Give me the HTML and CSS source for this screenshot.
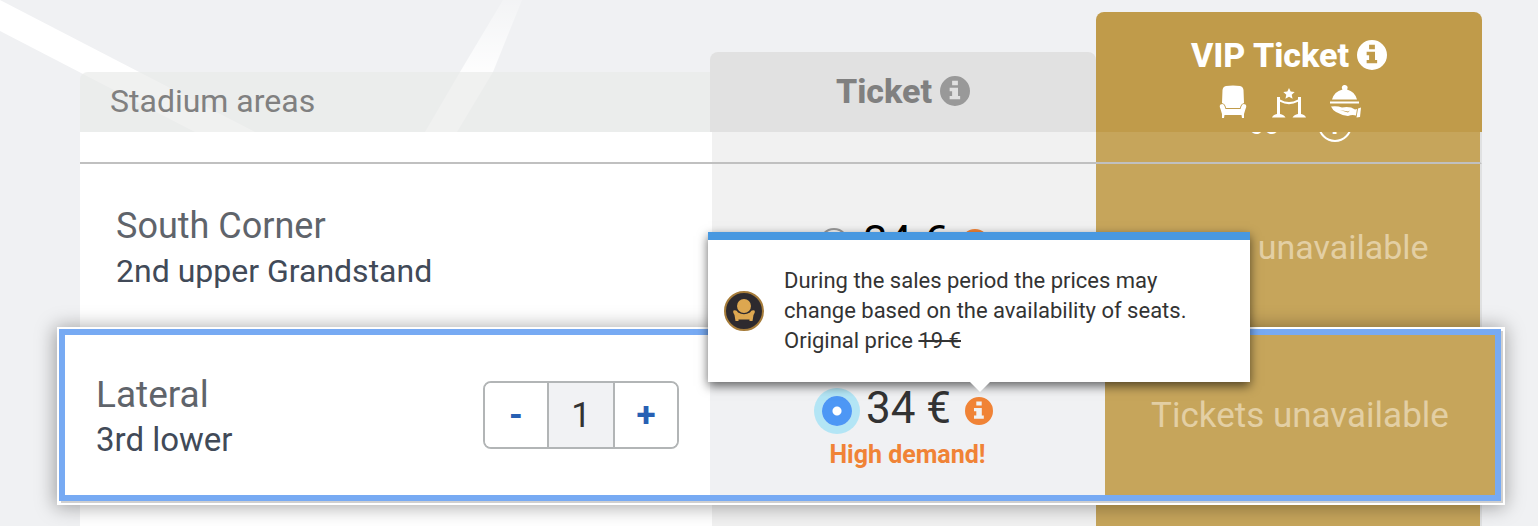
FILE: index.html
```html
<!DOCTYPE html>
<html lang="en">
<head>
    <meta charset="UTF-8">
    <meta name="viewport" content="width=device-width, initial-scale=1.0">
    <title>Stadium areas</title>
    <link rel="stylesheet" href="styles.css">
</head>
<body>
    <!-- background lines -->
    <svg class="lines" width="600" height="132" viewBox="0 0 600 132" aria-hidden="true">
        <defs>
            <linearGradient id="fade" x1="0" y1="0" x2="0" y2="1">
                <stop offset="0" stop-color="#fff" stop-opacity="0.2"/>
                <stop offset="0.55" stop-color="#fff" stop-opacity="0.9"/>
            </linearGradient>
        </defs>
        <path d="M0 0L255 132H195L0 31z" fill="#fff"/>
        <path d="M503 0H522L493 72L457 132H425L460 72z" fill="url(#fade)"/>
    </svg>
    <!-- shared info icon -->
    <svg class="sprite" aria-hidden="true">
        <symbol id="info" viewBox="0 0 28 28">
            <path fill-rule="evenodd" d="M14 0a14 14 0 1 0 0 28a14 14 0 0 0 0-28zM11.3 4.4h5.4v4.2h-5.4zM9 11h7.8v7.6h2v3.2H9v-3.2h2.3v-4.4H9z"/>
        </symbol>
    </svg>

    <table class="tickets">
        <thead>
            <tr class="head">
                <th class="head-area">Stadium areas</th>
                <th class="head-ticket">
                    <span class="title">Ticket
                        <svg class="info" aria-hidden="true"><use href="#info"/></svg>
                    </span>
                </th>
                <th class="head-vip">
                    <span class="title">VIP Ticket
                        <svg class="info" aria-hidden="true"><use href="#info"/></svg>
                    </span>
                    <span class="perks">
                        <svg viewBox="0 0 34 34" aria-hidden="true">
                            <path d="M10 1Q17 0 24 1Q27 1.500 27.500 5L28 18Q24.500 19 24 23H10Q9.500 19 6 18L6.500 5Q7 1.500 10 1z"/>
                            <path d="M4.500 19.500Q7.500 18 8.500 21L9.500 24H24.500L25.500 21Q26.500 18 29.500 19.500Q31 21 29.500 24L28 29V33H26L25.500 30H8.500L8 33H6V29L4.500 24Q3 21 4.500 19.500z"/>
                        </svg>
                        <svg viewBox="0 0 34 34" aria-hidden="true">
                            <path d="M17 3l1.700 3.600 4 .4-3 2.700.9 4-3.600-2-3.600 2 .9-4-3-2.700 4-.4z"/>
                            <path d="M5 12h3v17q4 .5 5.500 3.500H0Q1 29.500 5 29zM26 12h3v17q4 .5 5 3.500H20.500Q22 29.500 26 29z"/>
                            <path d="M8 14.500Q17 19.500 26 14.500V16.800Q17 21.500 8 16.800z"/>
                        </svg>
                        <svg viewBox="0 0 34 34" aria-hidden="true">
                            <path d="M17 0a2.700 2.700 0 0 1 2 4.400Q27 6.500 29 14.500H4Q6 6.500 14.500 4.400A2.700 2.700 0 0 1 17 0z"/>
                            <path d="M2 16.500H31V18.500H2z"/>
                            <path d="M3 21.500Q9 20.500 14 22.500Q22 21 27 24.500L29 24L28 30.500Q24 29.500 20 31Q13 30 8 27Q4.500 25 3 21.500zM12 25L20 26.500L22 25.500L20 27.500z" fill-rule="evenodd"/>
                            <path d="M30 23.500L33 22.500L32 32L28.500 32.500z"/>
                        </svg>
                    </span>
                </th>
            </tr>
        </thead>
        <tbody>
            <!-- row scrolled under the header -->
            <tr class="row row-scrolled">
                <td></td>
                <td class="ticket"></td>
                <td class="vip">
                    <span class="vip-price">60</span>
                    <span class="ring">i</span>
                </td>
            </tr>
            <tr class="row">
                <td class="area">
                    <div class="area-text">
                        <div class="area-name">South Corner</div>
                        <div class="area-level">2nd upper Grandstand</div>
                    </div>
                </td>
                <td class="ticket">
                    <div class="price">
                        <input type="radio" name="ticket" id="south" class="radio">
                        <label for="south">34 €</label>
                        <svg class="info" aria-hidden="true"><use href="#info"/></svg>
                    </div>
                </td>
                <td class="vip">Tickets unavailable</td>
            </tr>
            <tr class="row row-selected">
                <td class="area">
                    <div class="area-text">
                        <div class="area-name">Lateral</div>
                        <div class="area-level">3rd lower</div>
                    </div>
                    <div class="stepper">
                        <button type="button" aria-label="Less">-</button>
                        <input type="text" value="1" aria-label="Number of tickets">
                        <button type="button" aria-label="More">+</button>
                    </div>
                </td>
                <td class="ticket">
                    <div class="price">
                        <input type="radio" name="ticket" id="lateral" class="radio" checked>
                        <label for="lateral">34 €</label>
                        <span class="hint">
                            <svg class="info" aria-hidden="true"><use href="#info"/></svg>
                            <span class="tooltip" role="tooltip">
                                <svg class="badge" viewBox="0 0 40 40" aria-hidden="true">
                                    <circle cx="20" cy="20" r="19" fill="#2d2a2e" stroke="#a67c3a" stroke-width="2"/>
                                    <g fill="#dda750">
                                        <circle cx="20" cy="15" r="7"/>
                                        <path d="M9.500 19.500Q12.500 18.500 14 21.500Q20 25 26 21.500Q27.500 18.500 30.500 19.500Q31.500 21 29.500 24L28.500 30H25.500V28.500H14.500V30H11.500L10.500 24Q8.500 21 9.500 19.500z"/>
                                    </g>
                                </svg>
                                <span>During the sales period the prices may change based on the availability of seats. Original price <s>19 €</s></span>
                            </span>
                        </span>
                    </div>
                    <div class="demand">High demand!</div>
                </td>
                <td class="vip">Tickets unavailable</td>
            </tr>
            <tr class="row row-next">
                <td></td>
                <td class="ticket"></td>
                <td class="vip"></td>
            </tr>
        </tbody>
    </table>
</body>
</html>
```
FILE: styles.css
```css
* {
    box-sizing: border-box;
}
body {
    margin: 0;
    padding: 12px 56px 0 80px;
    background-color: #f0f1f3;
    font-family: Roboto, "Liberation Sans", sans-serif;
}
.lines {
    position: absolute;
    top: 0;
    left: 0;
    z-index: -1;
}
.sprite {
    position: absolute;
    width: 0;
    height: 0;
}
.info {
    width: 30px;
    height: 30px;
    fill: currentColor;
}

/* table */
.tickets, .tickets thead, .tickets tbody {
    display: block;
}
th, td {
    padding: 0;
}
.head {
    display: grid;
    grid-template-columns: 630fr 386fr 386fr;
    align-items: end;
    color: #808080;
}
.head-area {
    height: 60px;
    border-radius: 8px 0 0 0;
    background-color: rgba(232, 234, 232, 0.67);
    font-size: 32px;
    font-weight: 400;
    line-height: 58px;
    text-align: left;
    text-indent: 30px;
}
.head-ticket, .head-vip {
    display: flex;
    flex-direction: column;
    align-items: center;
    border-radius: 8px 8px 0 0;
    font-size: 34px;
    font-weight: 800;
}
.head-ticket {
    height: 80px;
    padding-top: 17px;
    background-color: #e1e1e1;
}
.head-ticket .info {
    color: #999;
}
.head-vip {
    height: 120px;
    padding-top: 21px;
    background-color: #c09b4a;
    color: #fff;
}
.title {
    display: flex;
    align-items: center;
    gap: 8px;
    line-height: 44px;
}
.perks {
    display: flex;
    gap: 22px;
    padding-top: 8px;
}
.perks svg {
    width: 34px;
    height: 34px;
    fill: #fff;
}

/* rows */
.row {
    display: grid;
    grid-template-columns: 632fr 384fr 384fr;
    height: 168px;
    border-right: 2px solid #e0e1e2;
    border-bottom: 2px solid #c0c0c0;
    background-color: #fff;
}
.row-scrolled {
    grid-template-rows: 30px;
    height: 32px;
    overflow: hidden;
}
.row-next {
    height: 25px;
    border-bottom: 0;
}
.area {
    display: flex;
    align-items: center;
    justify-content: space-between;
    padding: 0 31px 0 36px;
    line-height: 45px;
}
.area-text {
    padding-top: 4px;
}
.area-name {
    color: #5f646b;
    font-size: 36px;
}
.area-level {
    color: #414a58;
    font-size: 32px;
}
.ticket {
    background-color: #f1f1f1;
}
.vip {
    display: flex;
    align-items: center;
    justify-content: center;
    padding-right: 8px;
    background-color: #c6a55b;
    color: #e3cfa4;
    font-size: 34px;
}
.row-scrolled .vip {
    align-items: flex-end;
    gap: 38px;
    padding: 0 0 20px 24px;
    color: #fff;
}
.vip-price {
    font-size: 28px;
    line-height: 34px;
}
.ring {
    flex: none;
    width: 34px;
    height: 34px;
    border: 2px solid #fff;
    border-radius: 50%;
    font-size: 26px;
    font-weight: 700;
    line-height: 30px;
    text-align: center;
}
.price {
    display: flex;
    align-items: center;
    justify-content: center;
    gap: 14px;
    padding-top: 57px;
    color: #000;
    font-size: 43px;
    line-height: 38px;
}
.price label {
    padding-bottom: 6px;
}
.price .info {
    display: block;
    width: 28px;
    height: 28px;
    color: #f08336;
}
.radio {
    appearance: none;
    width: 30px;
    height: 30px;
    margin: 0;
    border: 2px solid #999;
    border-radius: 50%;
    background-color: #f5f5f5;
}
.radio:checked {
    border: 0;
    background: radial-gradient(circle, #fff 4px, #4d97f5 5px);
    box-shadow: 0 0 0 8px #b3e5f5;
}
.demand {
    color: #f08336;
    font-size: 25px;
    font-weight: 700;
    line-height: 44px;
    text-align: center;
}

/* selected row */
.row-selected {
    position: relative;
    grid-template-columns: 645fr 395fr 390fr;
    height: 172px;
    margin: -3px -19px 0 -21px;
    border: 6px solid #77aaf3;
    box-shadow: 2px 2px 0 #d0d0d0, 1px 1px 0 3px #fff, 0 2px 18px 4px rgba(0, 0, 0, 0.35);
}
.row-selected .area {
    padding-left: 31px;
}
.row-selected .area-name {
    font-size: 37px;
}
.row-selected .area-level {
    font-size: 33px;
}
.row-selected .ticket {
    background-color: #f0f1f3;
}
.row-selected .price {
    padding-top: 54px;
    color: #333;
    font-size: 44px;
}
.row-selected .vip {
    padding: 0;
    font-size: 35px;
}

/* quantity */
.stepper {
    display: flex;
    height: 68px;
    border: 2px solid #b2b5b6;
    border-radius: 8px;
    overflow: hidden;
}
.stepper button, .stepper input {
    width: 62px;
    padding: 0;
    border: 0;
    font-family: inherit;
    font-size: 35px;
    text-align: center;
}
.stepper button {
    background-color: #fff;
    color: #2760b3;
    font-weight: 700;
    cursor: pointer;
}
.stepper input {
    width: 68px;
    border-left: 2px solid #b2b5b6;
    border-right: 2px solid #b2b5b6;
    background-color: #f1f2f4;
    color: #333;
}

/* tooltip */
.hint {
    position: relative;
}
.tooltip {
    position: absolute;
    bottom: calc(100% + 15px);
    left: -257px;
    z-index: 1;
    display: flex;
    align-items: center;
    gap: 20px;
    width: 542px;
    height: 150px;
    padding: 0 40px 0 16px;
    border-top: 8px solid #4898e0;
    background-color: #fff;
    box-shadow: 0 4px 10px rgba(0, 0, 0, 0.6);
    color: #333;
    font-size: 22px;
    line-height: 30px;
}
.tooltip::after {
    content: "";
    position: absolute;
    top: 100%;
    left: 262px;
    border: 10px solid transparent;
    border-top-color: #fff;
    border-bottom: 0;
}
.badge {
    flex: none;
    width: 40px;
    height: 40px;
}
```
